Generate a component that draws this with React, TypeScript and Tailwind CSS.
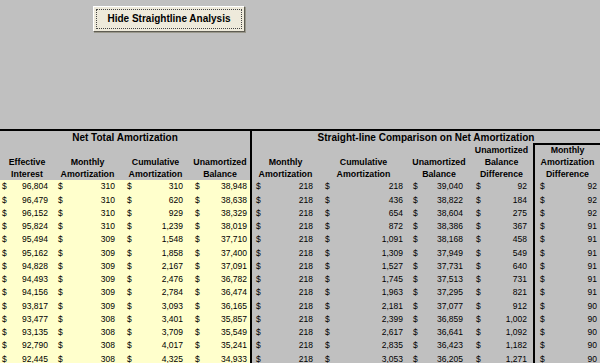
import React from 'react';

type Row = string[];

// A..D = net total amortization, E..H = straight-line comparison, I = monthly difference
const rows: Row[] = [
  ['96,804', '310', '310', '38,948', '218', '218', '39,040', '92', '92'],
  ['96,479', '310', '620', '38,638', '218', '436', '38,822', '184', '92'],
  ['96,152', '310', '929', '38,329', '218', '654', '38,604', '275', '92'],
  ['95,824', '310', '1,239', '38,019', '218', '872', '38,386', '367', '91'],
  ['95,494', '309', '1,548', '37,710', '218', '1,091', '38,168', '458', '91'],
  ['95,162', '309', '1,858', '37,400', '218', '1,309', '37,949', '549', '91'],
  ['94,828', '309', '2,167', '37,091', '218', '1,527', '37,731', '640', '91'],
  ['94,493', '309', '2,476', '36,782', '218', '1,745', '37,513', '731', '91'],
  ['94,156', '309', '2,784', '36,474', '218', '1,963', '37,295', '821', '91'],
  ['93,817', '309', '3,093', '36,165', '218', '2,181', '37,077', '912', '90'],
  ['93,477', '308', '3,401', '35,857', '218', '2,399', '36,859', '1,002', '90'],
  ['93,135', '308', '3,709', '35,549', '218', '2,617', '36,641', '1,092', '90'],
  ['92,790', '308', '4,017', '35,241', '218', '2,835', '36,423', '1,182', '90'],
  ['92,445', '308', '4,325', '34,933', '218', '3,053', '36,205', '1,271', '90'],
];

const pads = [
  'pl-[2px] pr-[6px]',
  'pl-[4px] pr-[6px]',
  'pl-[6px] pr-[7px]',
  'pl-[5px] pr-[3px]',
  'pl-[4px] pr-[6px]',
  'pl-[6px] pr-[5px]',
  'pl-[5px] pr-[7px]',
  'pl-[6px] pr-[6px]',
  'pl-[5px] pr-[3px]',
];

function Money({ value, pad }: { value: string; pad: string }) {
  return (
    <div className={`flex h-[13.25px] items-center justify-between leading-none ${pad}`}>
      <span>$</span>
      <span>{value}</span>
    </div>
  );
}

function Head({ lines }: { lines: string[] }) {
  return (
    <div className="flex h-full flex-col items-center justify-end text-center leading-[12px]">
      {lines.map((l) => (
        <span key={l}>{l}</span>
      ))}
    </div>
  );
}

export default function App() {
  return (
    <div className="h-[363px] w-[600px] overflow-hidden bg-[#c0c0c0] font-['Liberation_Sans',Arial,sans-serif] text-black">
      {/* toolbar area */}
      <div className="h-[129px] pl-[93px] pt-[5px]">
        <button className="h-[26px] w-[152px] border border-t-white border-l-white border-b-[#5e5c52] border-r-[#5e5c52] bg-[#eeeadb] p-[2px] shadow-[1px_1px_0_#9a988c]">
          <div className="flex h-full items-center justify-center border border-dotted border-[#444] text-[10px] font-bold">
            Hide Straightline Analysis
          </div>
        </button>
      </div>

      <div className="h-[2px] bg-black" />

      <div className="flex">
        {/* Net total amortization */}
        <div className="w-[250px]">
          <div className="flex h-[12px] items-center justify-center text-[10px] font-bold">Net Total Amortization</div>
          <div className="grid h-[37px] grid-cols-[54px_67px_69px_60px] pt-[1px] text-[8.8px] font-bold">
            <Head lines={['Effective', 'Interest']} />
            <Head lines={['Monthly', 'Amortization']} />
            <Head lines={['Cumulative', 'Amortization']} />
            <Head lines={['Unamortized', 'Balance']} />
          </div>
          <div className="grid grid-cols-[54px_67px_69px_60px] bg-[#ffffcc] text-[8.5px]">
            {rows.map((r, i) =>
              r.slice(0, 4).map((v, j) => <Money key={`${i}-${j}`} value={v} pad={pads[j]} />)
            )}
          </div>
        </div>

        <div className="w-[2px] bg-black" />

        {/* Straight-line comparison */}
        <div className="w-[348px]">
          <div className="flex h-[12px] items-center justify-center text-[10px] font-bold">
            Straight-line Comparison on Net Amortization
          </div>
          <div className="flex">
            <div className="w-[281px]">
              <div className="grid h-[37px] grid-cols-[67px_89px_62px_63px] pt-[1px] text-[8.8px] font-bold">
                <Head lines={['Monthly', 'Amortization']} />
                <Head lines={['Cumulative', 'Amortization']} />
                <Head lines={['Unamortized', 'Balance']} />
                <Head lines={['Unamortized', 'Balance', 'Difference']} />
              </div>
              <div className="grid grid-cols-[67px_89px_62px_63px] text-[8.5px]">
                {rows.map((r, i) =>
                  r.slice(4, 8).map((v, j) => <Money key={`${i}-${j}`} value={v} pad={pads[j + 4]} />)
                )}
              </div>
            </div>

            <div className="w-[2px] bg-black" />

            <div className="w-[65px]">
              <div className="h-[37px] border-t-2 border-black text-[8.8px] font-bold">
                <Head lines={['Monthly', 'Amortization', 'Difference']} />
              </div>
              <div className="text-[8.5px]">
                {rows.map((r, i) => (
                  <Money key={i} value={r[8]} pad={pads[8]} />
                ))}
              </div>
            </div>
          </div>
        </div>
      </div>
    </div>
  );
}
